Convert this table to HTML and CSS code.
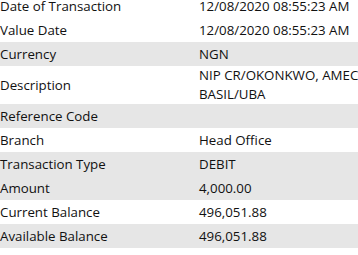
FILE: index.html
```html
<!DOCTYPE html>
<html>
<head>
<meta charset="utf-8">
<link rel="stylesheet" href="styles.css">
</head>
<body>
<div class="details">
  <div class="row"><div class="label">Date of Transaction</div><div class="value">12/08/2020 08:55:23 AM</div></div>
  <div class="row"><div class="label">Value Date</div><div class="value">12/08/2020 08:55:23 AM</div></div>
  <div class="row shaded"><div class="label">Currency</div><div class="value">NGN</div></div>
  <div class="row tall"><div class="label">Description</div><div class="value">NIP CR/OKONKWO, AMECHI BASIL/UBA</div></div>
  <div class="row shaded"><div class="label">Reference Code</div><div class="value"></div></div>
  <div class="row"><div class="label">Branch</div><div class="value">Head Office</div></div>
  <div class="row shaded"><div class="label">Transaction Type</div><div class="value">DEBIT</div></div>
  <div class="row shaded"><div class="label">Amount</div><div class="value">4,000.00</div></div>
  <div class="row"><div class="label">Current Balance</div><div class="value">496,051.88</div></div>
  <div class="row shaded"><div class="label">Available Balance</div><div class="value">496,051.88</div></div>
</div>
</body>
</html>
```

FILE: styles.css
```css
html, body {
  margin: 0;
  padding: 0;
  background: #ffffff;
  overflow: hidden;
}
body {
  font-family: "Open Sans", "Noto Sans", sans-serif;
  font-size: 13.3px;
  color: #111111;
}
.details {
  margin-top: -6px;
  width: 420px;
}
.row {
  display: grid;
  grid-template-columns: 199px 221px;
  align-items: center;
  height: 24px;
}
.row.shaded {
  background: #e6e6e6;
}
.row.tall {
  height: 38px;
}
.label, .value {
  white-space: nowrap;
}
.row.tall .value {
  white-space: normal;
  line-height: 19px;
  width: 200px;
}
```
